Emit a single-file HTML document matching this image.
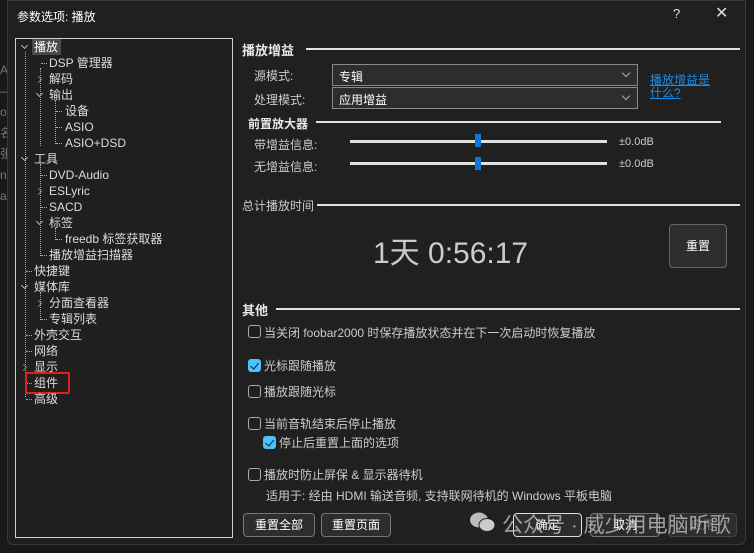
<!DOCTYPE html>
<html><head><meta charset="utf-8"><style>
*{margin:0;padding:0;box-sizing:border-box}
body{width:754px;height:553px;background:#191919;font-family:"Liberation Sans","Noto Sans CJK SC",sans-serif;font-size:12px;color:#e0e0e0;position:relative;overflow:hidden}
.a{position:absolute;white-space:nowrap}
#dlg{position:absolute;left:7px;top:0;width:739px;height:545px;background:#202020;border:1px solid #3a3a3a;border-radius:0 0 6px 6px}
#tree{position:absolute;left:15px;top:38px;width:218px;height:500px;border:1px solid #d0d0d0;background:#1f1f1f}
.t{position:absolute;font-size:12px;color:#dcdcdc;line-height:16px}
.vl{position:absolute;border-left:1px dotted #aaa}
.hl{position:absolute;border-top:1px dotted #aaa;width:6px}
.cd,.cr{position:absolute;width:5px;height:5px;border-right:1px solid #bbb;transform:rotate(45deg)}
.cd{border-bottom:1px solid #bbb}
.cr{border-top:1px solid #888}
.cr{border-right-color:#888}
.h{font-weight:bold;font-size:13px;color:#e8e8e8}
.line{position:absolute;height:2px;background:#e0e0e0}
.sel{position:absolute;height:22px;border:1px solid #888;background:#2d2d2d;color:#fff;padding:3px 6px;font-size:12px}
.sel:after{content:"";position:absolute;right:8px;top:5px;width:5px;height:5px;border-right:1px solid #aaa;border-bottom:1px solid #aaa;transform:rotate(45deg)}
.track{position:absolute;height:3px;background:#e0e0e0;left:350px;width:257px}
.thumb{position:absolute;width:6px;height:13px;background:#0a78d7}
.cb{position:absolute;width:13px;height:13px;border:1px solid #aaa;border-radius:3px}
.cbk{background:#4cc2ff;border-color:#4cc2ff}
.cbk:after{content:"";position:absolute;left:3px;top:1px;width:4px;height:7px;border-right:1.5px solid #1a1a1a;border-bottom:1.5px solid #1a1a1a;transform:rotate(40deg)}
.btn{position:absolute;height:24px;border:1px solid #777;border-radius:4px;background:#2d2d2d;color:#fff;text-align:center;line-height:22px;font-size:12px}
</style></head><body>
<div class="a" style="left:0;top:60px;color:#777;font-size:12px;line-height:21px">A<br>—<br>o<br>名<br>张<br>n<br>a</div>
<div id="dlg"></div>
<div class="a" style="left:17px;top:8px;font-size:12px;color:#fff">参数选项: 播放</div>
<div class="a" style="left:673px;top:6px;font-size:13px;color:#ddd">?</div>
<div class="a" style="left:715px;top:3px;font-size:16px;color:#ddd">✕</div>
<div id="tree"></div>
<div class="vl" style="left:25px;top:52px;height:345px"></div>
<div class="vl" style="left:40px;top:68px;height:78px"></div>
<div class="vl" style="left:55px;top:100px;height:44px"></div>
<div class="vl" style="left:40px;top:164px;height:92px"></div>
<div class="vl" style="left:55px;top:228px;height:12px"></div>
<div class="vl" style="left:40px;top:292px;height:28px"></div>
<div style="position:absolute;left:32px;top:39px;width:29px;height:16px;background:#4a4a4a"></div>
<div class="t" style="left:34px;top:39px;color:#fff">播放</div>
<div class="cd" style="left:22px;top:43px"></div>
<div class="hl" style="left:41px;top:63px"></div><div class="t" style="left:49px;top:55px">DSP 管理器</div>
<div class="cr" style="left:36px;top:77px"></div><div class="t" style="left:49px;top:71px">解码</div>
<div class="cd" style="left:37px;top:91px"></div><div class="t" style="left:49px;top:87px">输出</div>
<div class="hl" style="left:56px;top:111px"></div><div class="t" style="left:65px;top:103px">设备</div>
<div class="hl" style="left:56px;top:127px"></div><div class="t" style="left:65px;top:119px">ASIO</div>
<div class="hl" style="left:56px;top:143px"></div><div class="t" style="left:65px;top:135px">ASIO+DSD</div>
<div class="cd" style="left:22px;top:155px"></div><div class="t" style="left:34px;top:151px">工具</div>
<div class="hl" style="left:41px;top:175px"></div><div class="t" style="left:49px;top:167px">DVD-Audio</div>
<div class="cr" style="left:36px;top:189px"></div><div class="t" style="left:49px;top:183px">ESLyric</div>
<div class="hl" style="left:41px;top:207px"></div><div class="t" style="left:49px;top:199px">SACD</div>
<div class="cd" style="left:37px;top:219px"></div><div class="t" style="left:49px;top:215px">标签</div>
<div class="hl" style="left:56px;top:239px"></div><div class="t" style="left:65px;top:231px">freedb 标签获取器</div>
<div class="hl" style="left:41px;top:255px"></div><div class="t" style="left:49px;top:247px">播放增益扫描器</div>
<div class="hl" style="left:26px;top:271px"></div><div class="t" style="left:34px;top:263px">快捷键</div>
<div class="cd" style="left:22px;top:283px"></div><div class="t" style="left:34px;top:279px">媒体库</div>
<div class="cr" style="left:36px;top:301px"></div><div class="t" style="left:49px;top:295px">分面查看器</div>
<div class="hl" style="left:41px;top:319px"></div><div class="t" style="left:49px;top:311px">专辑列表</div>
<div class="hl" style="left:26px;top:335px"></div><div class="t" style="left:34px;top:327px">外壳交互</div>
<div class="hl" style="left:26px;top:351px"></div><div class="t" style="left:34px;top:343px">网络</div>
<div class="cr" style="left:21px;top:365px"></div><div class="t" style="left:34px;top:359px">显示</div>
<div class="hl" style="left:26px;top:383px"></div><div class="t" style="left:34px;top:375px">组件</div>
<div style="position:absolute;left:25px;top:372px;width:45px;height:22px;border:2px solid #e0201a;border-radius:2px"></div>
<div class="hl" style="left:26px;top:399px"></div><div class="t" style="left:34px;top:391px">高级</div>

<div class="a h" style="left:242px;top:40px">播放增益</div>
<div class="line" style="left:306px;top:48px;width:434px"></div>
<div class="a" style="left:254px;top:67px;color:#ccc">源模式:</div>
<div class="sel" style="left:332px;top:64px;width:306px">专辑</div>
<div class="a" style="left:254px;top:91px;color:#ccc">处理模式:</div>
<div class="sel" style="left:332px;top:87px;width:306px">应用增益</div>
<div class="a" style="left:650px;top:74px;color:#1a8ce8;text-decoration:underline;line-height:13px">播放增益是<br>什么?</div>
<div class="a h" style="left:248px;top:115px;font-size:12px">前置放大器</div>
<div class="line" style="left:316px;top:121px;width:405px"></div>
<div class="a" style="left:254px;top:136px;color:#ccc">带增益信息:</div>
<div class="track" style="top:140px"></div><div class="thumb" style="left:475px;top:134px"></div>
<div class="a" style="left:619px;top:136px;color:#ccc;font-size:11px">±0.0dB</div>
<div class="a" style="left:254px;top:158px;color:#ccc">无增益信息:</div>
<div class="track" style="top:162px"></div><div class="thumb" style="left:475px;top:157px"></div>
<div class="a" style="left:619px;top:158px;color:#ccc;font-size:11px">±0.0dB</div>
<div class="a" style="left:242px;top:197px;color:#ccc">总计播放时间</div>
<div class="line" style="left:317px;top:204px;width:423px"></div>
<div class="a" style="left:373px;top:228px;font-size:30px;color:#ccc">1天 0:56:17</div>
<div class="btn" style="left:669px;top:224px;width:58px;height:44px;line-height:42px;border-color:#666">重置</div>
<div class="a h" style="left:242px;top:300px">其他</div>
<div class="line" style="left:276px;top:308px;width:464px"></div>
<div class="cb" style="left:248px;top:325px"></div><div class="a" style="left:264px;top:324px;color:#ccc">当关闭 foobar2000 时保存播放状态并在下一次启动时恢复播放</div>
<div class="cb cbk" style="left:248px;top:359px"></div><div class="a" style="left:264px;top:357px;color:#ccc">光标跟随播放</div>
<div class="cb" style="left:248px;top:385px"></div><div class="a" style="left:264px;top:383px;color:#ccc">播放跟随光标</div>
<div class="cb" style="left:248px;top:417px"></div><div class="a" style="left:264px;top:415px;color:#ccc">当前音轨结束后停止播放</div>
<div class="cb cbk" style="left:263px;top:436px"></div><div class="a" style="left:279px;top:434px;color:#ccc">停止后重置上面的选项</div>
<div class="cb" style="left:248px;top:468px"></div><div class="a" style="left:264px;top:466px;color:#ccc">播放时防止屏保 &amp; 显示器待机</div>
<div class="a" style="left:266px;top:487px;color:#ccc">适用于: 经由 HDMI 输送音频, 支持联网待机的 Windows 平板电脑</div>
<div class="btn" style="left:243px;top:513px;width:72px">重置全部</div>
<div class="btn" style="left:321px;top:513px;width:70px">重置页面</div>
<div class="btn" style="left:513px;top:513px;width:69px;border-color:#ddd">确定</div>
<div class="btn" style="left:590px;top:513px;width:70px">取消</div>
<div class="btn" style="left:668px;top:513px;width:69px;border-color:#444;color:#777">应用</div>
<svg class="a" style="left:469px;top:510px" width="28" height="24"><ellipse cx="10" cy="10" rx="9" ry="7.5" fill="#bbb"/><ellipse cx="18" cy="15" rx="8" ry="6.5" fill="#ccc" stroke="#202020"/></svg>
<div class="a" style="left:502px;top:509px;font-size:21px;color:rgba(200,200,200,0.75)">公众号 · 威少用电脑听歌</div>
</body></html>
